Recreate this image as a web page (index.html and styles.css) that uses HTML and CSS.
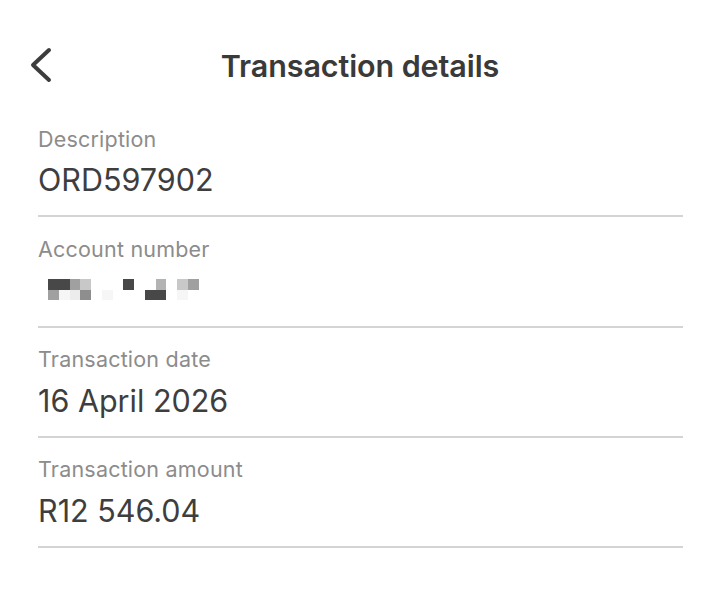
FILE: index.html
```html
<!DOCTYPE html>
<html lang="en">
<head>
<meta charset="utf-8">
<title>Transaction details</title>
<link rel="stylesheet" href="styles.css">
</head>
<body>
<div class="screen">
  <header class="topbar">
    <button class="back" aria-label="Back">
      <svg width="26" height="36" viewBox="0 0 26 36"><path d="M22 3 L6 18 L22 33" fill="none" stroke="#3d3d3d" stroke-width="4" stroke-linecap="round" stroke-linejoin="round"/></svg>
    </button>
    <h1 class="title">Transaction details</h1>
    <span class="spacer"></span>
  </header>
  <main class="list">
    <section class="row">
      <div class="label">Description</div>
      <div class="value">ORD597902</div>
    </section>
    <section class="row">
      <div class="label">Account number</div>
      <div class="value masked">
        <div class="pix">
          <span class="d1"></span><span class="d1"></span><span class="g2"></span><span class="g4"></span><span></span><span></span><span></span><span class="d1"></span><span></span><span></span><span class="g3"></span><span></span><span class="g4"></span><span class="g2"></span>
          <span class="g2"></span><span class="g6"></span><span class="g5"></span><span class="g1"></span><span></span><span class="g6"></span><span></span><span></span><span></span><span class="d1"></span><span class="d1"></span><span></span><span class="g6"></span><span></span>
        </div>
      </div>
    </section>
    <section class="row">
      <div class="label">Transaction date</div>
      <div class="value">16 April 2026</div>
    </section>
    <section class="row">
      <div class="label">Transaction amount</div>
      <div class="value">R12 546.04</div>
    </section>
  </main>
</div>
</body>
</html>
```
FILE: styles.css
```css
* { box-sizing: border-box; }
html, body { margin: 0; padding: 0; background: #ffffff; }
body { font-family: Inter, "Noto Sans", "Liberation Sans", sans-serif; color: #3c3c3c; }
.screen { width: 720px; height: 597px; }
.topbar {
  height: 107px;
  display: grid;
  grid-template-columns: 1fr auto 1fr;
  align-items: start;
  padding: 47px 27px 0 27px;
}
.back {
  justify-self: start;
  border: 0; background: none; padding: 0; margin: 0;
  width: 26px; height: 36px;
  display: block;
}
.back svg { display: block; }
.title {
  margin: 0;
  font-size: 30.5px;
  line-height: 38px;
  font-weight: 600;
  color: #3a3a3a;
  letter-spacing: -0.1px;
}
.list { padding: 0 37px 0 38px; }
.row {
  padding: 19.5px 0 15.33px;
  border-bottom: 2px solid #d4d4d4;
}
.label {
  font-size: 21.5px;
  line-height: 24px;
  letter-spacing: 0.2px;
  color: #8c8c8c;
}
.value {
  margin-top: 9.5px;
  font-size: 30.5px;
  line-height: 40px;
  color: #3e3e3e;
}
.masked { height: 40px; padding: 9px 0 0 10px; }
.pix {
  display: grid;
  grid-template-columns: repeat(14, 10.75px);
  grid-template-rows: repeat(2, 10.5px);
}
.pix span { display: block; }
.d1 { background: #484848; }
.g1 { background: #8e8e8e; }
.g2 { background: #a0a0a0; }
.g3 { background: #b3b3b3; }
.g4 { background: #c8c8c8; }
.g5 { background: #ececec; }
.g6 { background: #f6f6f6; }
```
